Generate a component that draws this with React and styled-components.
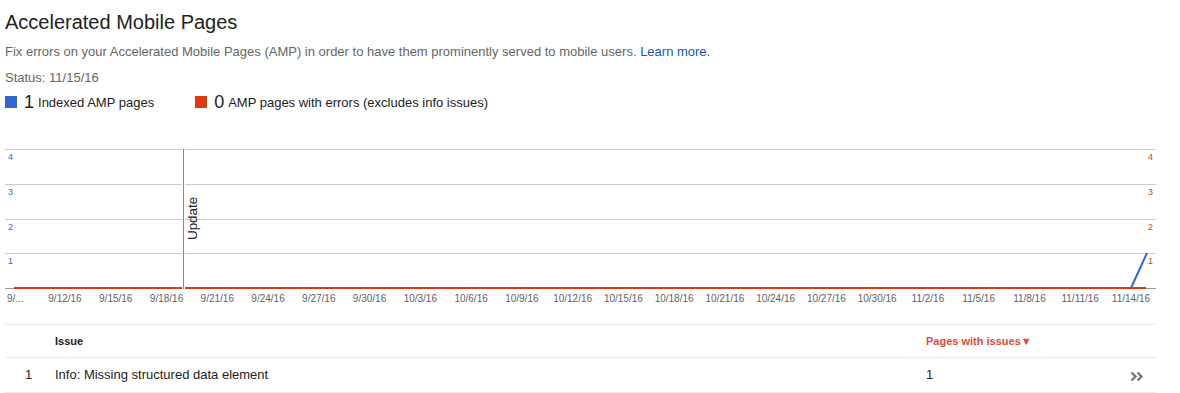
import React from 'react'
import styled, { createGlobalStyle } from 'styled-components'

const GlobalStyle = createGlobalStyle`
  body {
    margin: 0;
    background: #fff;
    font-family: "Liberation Sans", Arial, sans-serif;
  }
`

const dates = [
  '9/12/16', '9/15/16', '9/18/16', '9/21/16', '9/24/16', '9/27/16', '9/30/16',
  '10/3/16', '10/6/16', '10/9/16', '10/12/16', '10/15/16', '10/18/16', '10/21/16',
  '10/24/16', '10/27/16', '10/30/16', '11/2/16', '11/5/16', '11/8/16', '11/11/16', '11/14/16'
]

const grid = [149, 184, 219, 253]

function Chart() {
  return (
    <ChartBox>
      <svg width="1180" height="170" viewBox="0 140 1180 170">
        {grid.map((y, i) => (
          <g key={y}>
            <line x1="5" x2="1156" y1={y + 0.5} y2={y + 0.5} stroke="#ccc" />
            <text x="8" y={y + 11} fontSize="9" fill="#3f5ec6">{4 - i}</text>
            <text x="1148" y={y + 11} fontSize="9" fill="#dc3912">{4 - i}</text>
          </g>
        ))}
        <line x1="5" x2="1156" y1="288.5" y2="288.5" stroke="#999" />
        <line x1="14" x2="1146" y1="288" y2="288" stroke="#dc3912" strokeWidth="2" />
        <line x1="1131" y1="288" x2="1147" y2="253" stroke="#3366cc" strokeWidth="2" />
        <line x1="183.5" x2="183.5" y1="149" y2="289" stroke="#fff" strokeWidth="3" />
        <line x1="183.5" x2="183.5" y1="149" y2="289" stroke="#888" />
        <text transform="translate(197 240) rotate(-90)" fontSize="13.4" fill="#222">Update</text>
        <text x="7" y="302" fontSize="10" fill="#5f5f5f">9/...</text>
        {dates.map((d, i) => (
          <text key={d} x={65 + i * 50.76} y="302" fontSize="10" fill="#5f5f5f" textAnchor="middle">{d}</text>
        ))}
      </svg>
    </ChartBox>
  )
}

function Arrows() {
  return (
    <svg width="14" height="11" viewBox="0 0 14 11">
      <polyline points="1.5,1.5 5.5,5.5 1.5,9.5" fill="none" stroke="#777" strokeWidth="2.4" />
      <polyline points="7.5,1.5 11.5,5.5 7.5,9.5" fill="none" stroke="#777" strokeWidth="2.4" />
    </svg>
  )
}

function App() {
  return (
    <Page>
      <GlobalStyle />
      <Title>Accelerated Mobile Pages</Title>
      <Description>
        Fix errors on your Accelerated Mobile Pages (AMP) in order to have them prominently served to mobile users.{' '}
        <Link>Learn more.</Link>
      </Description>
      <Status>Status: 11/15/16</Status>
      <Legend>
        <LegendItem>
          <Swatch color="#3366cc" />
          <Count>1</Count>
          <LegendLabel>Indexed AMP pages</LegendLabel>
        </LegendItem>
        <LegendItem>
          <Swatch color="#dc3912" />
          <Count>0</Count>
          <LegendLabel>AMP pages with errors (excludes info issues)</LegendLabel>
        </LegendItem>
      </Legend>
      <Chart />
      <Table>
        <HeadRow>
          <Cell />
          <HeadCell>Issue</HeadCell>
          <HeadCell sorted>Pages with issues▼</HeadCell>
          <Cell />
        </HeadRow>
        <Row>
          <IndexCell>1</IndexCell>
          <Cell>Info: Missing structured data element</Cell>
          <Cell>1</Cell>
          <ArrowCell><Arrows /></ArrowCell>
        </Row>
      </Table>
    </Page>
  )
}

export default App

const Page = styled.div`
  width: 1180px;
  height: 393px;
  overflow: hidden;
`

const Title = styled.h1`
  margin: 0;
  padding: 10px 0 0 5px;
  font-size: 20px;
  line-height: 24px;
  font-weight: normal;
  color: #222;
`

const Description = styled.p`
  margin: 10px 0 0 5px;
  font-size: 13px;
  line-height: 16px;
  color: #666;
`

const Link = styled.a`
  color: #1155cc;
  cursor: pointer;
`

const Status = styled.div`
  margin: 10px 0 0 5px;
  font-size: 13px;
  line-height: 16px;
  color: #666;
`

const Legend = styled.div`
  display: flex;
  gap: 41px;
  margin: 5px 0 0 5px;
  height: 20px;
  align-items: flex-end;
`

const LegendItem = styled.div`
  display: flex;
  align-items: flex-end;
`

const Swatch = styled.span`
  width: 12px;
  height: 12px;
  background: ${p => p.color};
  margin-right: 7px;
  margin-bottom: 3px;
`

const Count = styled.span`
  font-size: 18px;
  line-height: 18px;
  color: #222;
  margin-right: 4px;
`

const LegendLabel = styled.span`
  font-size: 13px;
  line-height: 16px;
  color: #222;
`

const ChartBox = styled.div`
  margin-top: 29px;
  height: 170px;
  svg {
    display: block;
    font-family: "Liberation Sans", Arial, sans-serif;
  }
`

const Table = styled.div`
  margin: 14px 0 0 5px;
  width: 1151px;
  border-top: 1px solid #ebebeb;
`

const HeadRow = styled.div`
  display: grid;
  grid-template-columns: 50px 871px 194px 36px;
  height: 32px;
  align-items: center;
  border-bottom: 1px solid #ebebeb;
`

const Row = styled(HeadRow)`
  height: 32px;
  padding-bottom: 2px;
`

const Cell = styled.div`
  font-size: 13px;
  color: #222;
`

const HeadCell = styled.div`
  font-size: 11px;
  font-weight: bold;
  color: ${p => (p.sorted ? '#dd4b39' : '#222')};
`

const IndexCell = styled(Cell)`
  padding-left: 20px;
`

const ArrowCell = styled.div`
  display: flex;
  padding-left: 10px;
  padding-top: 4px;
`
